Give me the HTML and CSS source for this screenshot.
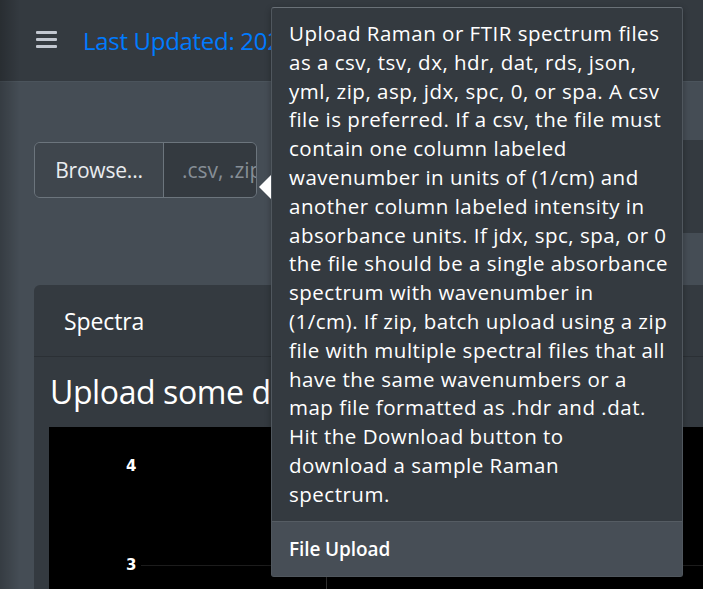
FILE: index.html
```html
<!DOCTYPE html>
<html lang="en">
<head>
    <meta charset="UTF-8">
    <meta name="viewport" content="width=device-width, initial-scale=1.0">
    <title>Spectrum Upload</title>
    <link rel="stylesheet" href="styles.css">
</head>
<body>
    <header class="navbar">
        <button class="menu-toggle" aria-label="Toggle menu">
            <svg width="22" height="18" viewBox="0 0 22 18">
                <rect x="0" y="0" width="21" height="3" rx="1" fill="#c2c7d0"/>
                <rect x="0" y="7" width="21" height="3" rx="1" fill="#c2c7d0"/>
                <rect x="0" y="14" width="21" height="3" rx="1" fill="#c2c7d0"/>
            </svg>
        </button>
        <span class="updated">Last Updated: 2024-01-15</span>
    </header>

    <main class="content">
        <div class="upload-row">
            <div class="file-input">
                <label class="browse">Browse...</label>
                <span class="file-name">.csv, .zip</span>
            </div>
            <div class="side-panel"></div>
        </div>

        <div class="card">
            <div class="card-header">Spectra</div>
            <div class="card-body">
                <h3>Upload some data to get started...</h3>
                <div class="plot">
                    <div class="tick tick-4">4</div>
                    <div class="tick tick-3">3</div>
                    <div class="grid-line"></div>
                </div>
            </div>
        </div>
    </main>

    <div class="popover">
        <div class="arrow"></div>
        <div class="popover-body">
            Upload Raman or FTIR spectrum files<br>
            as a csv, tsv, dx, hdr, dat, rds, json,<br>
            yml, zip, asp, jdx, spc, 0, or spa. A csv<br>
            file is preferred. If a csv, the file must<br>
            contain one column labeled<br>
            wavenumber in units of (1/cm) and<br>
            another column labeled intensity in<br>
            absorbance units. If jdx, spc, spa, or 0<br>
            the file should be a single absorbance<br>
            spectrum with wavenumber in<br>
            (1/cm). If zip, batch upload using a zip<br>
            file with multiple spectral files that all<br>
            have the same wavenumbers or a<br>
            map file formatted as .hdr and .dat.<br>
            Hit the Download button to<br>
            download a sample Raman<br>
            spectrum.
        </div>
        <div class="popover-header">File Upload</div>
    </div>
</body>
</html>
```

FILE: styles.css
```css
body {
    margin: 0;
    height: 589px;
    overflow: hidden;
    background: #454d55;
    font-family: "Open Sans", "Lato", sans-serif;
    color: #fff;
    position: relative;
}
/* shadow left by the collapsed sidebar */
body::before {
    content: "";
    position: absolute;
    left: 0;
    top: 0;
    bottom: 0;
    width: 20px;
    background: linear-gradient(to right, rgba(0, 0, 0, 0.22), rgba(0, 0, 0, 0));
    z-index: 5;
    pointer-events: none;
}
.navbar {
    height: 81px;
    background: #343a40;
    border-bottom: 1px solid #4b545c;
    display: flex;
    align-items: center;
    padding-left: 36px;
}
.menu-toggle {
    background: none;
    border: none;
    padding: 0;
    margin-right: 25px;
    display: flex;
    margin-top: -2px;
}
.updated {
    color: #007bff;
    font-size: 24px;
    letter-spacing: -0.3px;
    white-space: nowrap;
}
.content {
    padding: 60px 0 0 34px;
}
.upload-row {
    display: flex;
    justify-content: space-between;
    height: 143px;
}
.file-input {
    display: flex;
    width: 223px;
    height: 56px;
    border: 1px solid #6c757d;
    border-radius: 6px;
    overflow: hidden;
    box-sizing: border-box;
}
.browse {
    width: 128px;
    flex: none;
    background: #3f464d;
    border-right: 1px solid #6c757d;
    display: flex;
    align-items: center;
    justify-content: center;
    font-size: 21px;
    letter-spacing: -0.2px;
    color: #e9ecef;
}
.file-name {
    flex: 1;
    background: #343a40;
    color: #868e96;
    font-size: 21px;
    display: flex;
    align-items: center;
    padding-left: 18px;
    white-space: nowrap;
    overflow: hidden;
}
.side-panel {
    width: 120px;
    height: 93px;
    margin-top: -2px;
    background: #343a40;
}
.card {
    background: #343a40;
    border-radius: 6px 0 0 0;
    width: 700px;
}
.card-header {
    height: 72px;
    box-sizing: border-box;
    padding: 0 30px;
    display: flex;
    align-items: center;
    font-size: 23px;
    letter-spacing: -0.1px;
    border-bottom: 1px solid #2b3035;
}
.card-body {
    padding: 15px 0 0 15px;
}
.card-body h3 {
    margin: 0 0 15px 1px;
    font-size: 32px;
    font-weight: 400;
    line-height: 40px;
    letter-spacing: -0.4px;
    white-space: nowrap;
}
.plot {
    background: #000;
    height: 200px;
    position: relative;
}
.tick {
    position: absolute;
    left: 77px;
    font-family: "DejaVu Sans", sans-serif;
    font-size: 15px;
    font-weight: 600;
}
.tick-4 {
    top: 30px;
}
.tick-3 {
    top: 129px;
}
.grid-line {
    position: absolute;
    left: 92px;
    right: 0;
    top: 138px;
    height: 1px;
    background: #1c1c1c;
}
.grid-line::after {
    content: "";
    position: absolute;
    left: 185px;
    top: 11px;
    width: 1px;
    height: 40px;
    background: #333;
}
.popover {
    position: absolute;
    left: 271px;
    top: 7px;
    width: 412px;
    z-index: 10;
    background: #343a40;
    border: 1px solid #50575e;
    border-top-color: #6a7178;
    border-radius: 3px;
    box-sizing: border-box;
    box-shadow: 0 2px 6px rgba(0, 0, 0, 0.3);
}
.arrow {
    position: absolute;
    left: -13px;
    top: 167px;
    width: 0;
    height: 0;
    border-top: 12px solid transparent;
    border-bottom: 12px solid transparent;
    border-right: 12px solid #fff;
}
.popover-body {
    padding: 11px 17px 12px;
    font-size: 20.5px;
    line-height: 28.8px;
    letter-spacing: 0.5px;
    white-space: nowrap;
}
.popover-header {
    background: #474e56;
    border-top: 1px solid #555c63;
    padding: 13px 17px 12px;
    font-size: 19px;
    line-height: 29px;
    font-weight: 600;
    letter-spacing: -0.1px;
}
```
